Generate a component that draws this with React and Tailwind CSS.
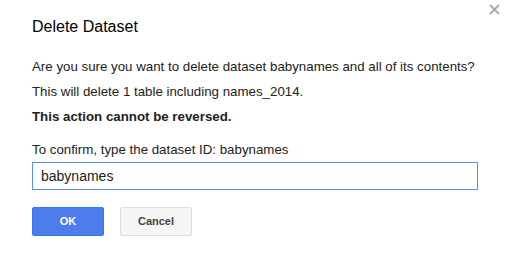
import React, { useState } from 'react';

export default function App() {
  const [value, setValue] = useState('babynames');

  return (
    <div className="relative w-[510px] h-[253px] bg-white font-['Liberation_Sans',Arial,sans-serif] text-[#222]">
      <button className="absolute right-[10px] top-[3px] w-[12px] h-[12px] flex items-center justify-center">
        <svg width="11" height="11" viewBox="0 0 11 11">
          <path d="M1 1 L10 10 M10 1 L1 10" stroke="#aaa" strokeWidth="2" />
        </svg>
      </button>

      <div className="pl-[32px] pr-[32px] pt-[18px]">
        <h2 className="text-[16px] leading-[18px] text-black">Delete Dataset</h2>

        <div className="mt-[23px] text-[13.3px] leading-[16px] text-[#222] flex flex-col gap-[9px]">
          <p>Are you sure you want to delete dataset babynames and all of its contents?</p>
          <p>This will delete 1 table including names_2014.</p>
          <p className="font-bold">This action cannot be reversed.</p>
        </div>

        <label className="block mt-[17px] text-[13.3px] leading-[16px] text-[#222]">
          To confirm, type the dataset ID: babynames
        </label>

        <input
          value={value}
          onChange={(e) => setValue(e.target.value)}
          className="mt-[4px] block w-[446px] h-[28px] border border-[#4d90fe] px-[8px] text-[14px] text-[#222] outline-none"
        />

        <div className="mt-[17px] flex gap-[16px]">
          <button className="w-[72px] h-[29px] rounded-[2px] border border-[#3079ed] bg-[#4d7ded] text-white text-[11px] font-bold">
            OK
          </button>
          <button className="w-[72px] h-[29px] rounded-[2px] border border-[#dcdcdc] bg-[#f5f5f5] text-[#444] text-[11px] font-bold">
            Cancel
          </button>
        </div>
      </div>
    </div>
  );
}
